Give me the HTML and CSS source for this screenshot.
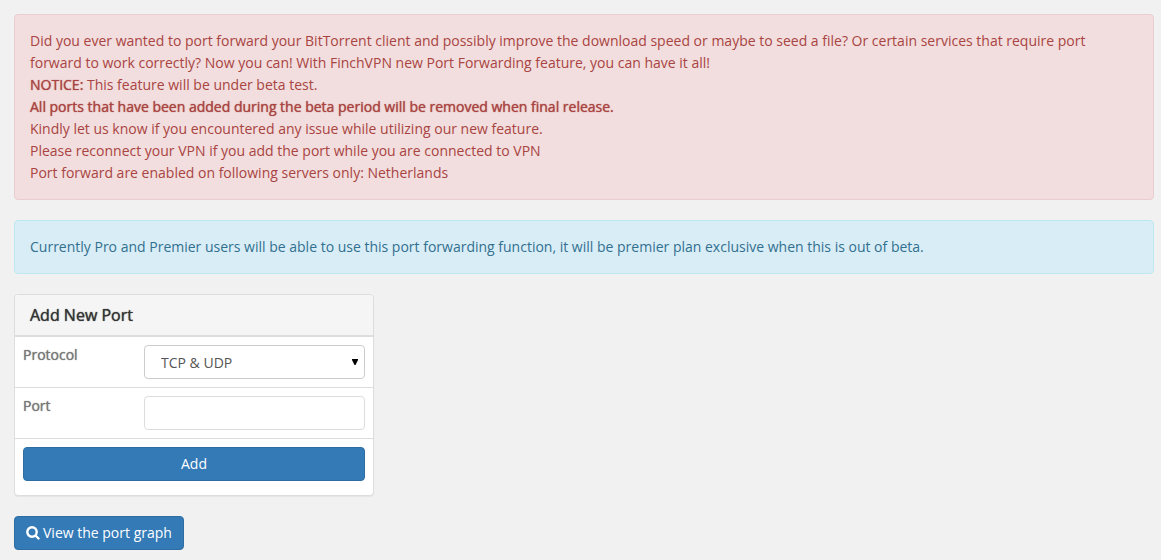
FILE: index.html
```html
<!DOCTYPE html>
<html lang="en">

<head>
    <meta charset="UTF-8">
    <meta name="viewport" content="width=device-width, initial-scale=1.0">
    <title>Port Forwarding</title>
    <link rel="stylesheet" href="styles.css">
</head>

<body>

    <div class="alert alert-danger">
        Did you ever wanted to port forward your BitTorrent client and possibly improve the download speed or maybe to seed a file? Or certain services that require port forward to work correctly? Now you can! With FinchVPN new Port Forwarding feature, you can have it all!<br>
        <b>NOTICE:</b> This feature will be under beta test.<br>
        <b>All ports that have been added during the beta period will be removed when final release.</b><br>
        Kindly let us know if you encountered any issue while utilizing our new feature.<br>
        Please reconnect your VPN if you add the port while you are connected to VPN<br>
        Port forward are enabled on following servers only: Netherlands
    </div>

    <div class="alert alert-info">
        Currently Pro and Premier users will be able to use this port forwarding function, it will be premier plan exclusive when this is out of beta.
    </div>

    <form class="panel">
        <h3 class="panel-heading">Add New Port</h3>
        <div class="form-row">
            <label for="protocol">Protocol</label>
            <div class="select-wrap">
                <select id="protocol" class="form-control">
                    <option>TCP &amp; UDP</option>
                    <option>TCP</option>
                    <option>UDP</option>
                </select>
                <svg class="arrow" width="6" height="6" viewBox="0 0 6 6"><path d="M0 0h6v1L3.5 6h-1L0 1z"/></svg>
            </div>
        </div>
        <div class="form-row">
            <label for="port">Port</label>
            <input type="text" id="port" class="form-control">
        </div>
        <div class="form-row form-submit">
            <button type="button" class="btn">Add</button>
        </div>
    </form>

    <a href="#" class="btn">
        <svg class="icon" width="14" height="14" viewBox="0 0 14 14"><circle cx="6" cy="6" r="4.7"/><path d="M9.5 9.5L12.5 12.5"/></svg>
        <span>View the port graph</span>
    </a>

</body>

</html>
```
FILE: styles.css
```css
* {
    box-sizing: border-box;
}

body {
    margin: 14px 7px 10px 14px;
    background-color: #f1f1f1;
    color: #676a6c;
    font-family: "Open Sans", "Liberation Sans", sans-serif;
    font-size: 14px;
    line-height: 22px;
}

.alert {
    padding: 15px;
    margin-bottom: 20px;
    border: 1px solid;
    border-radius: 4px;
}

.alert-danger {
    color: #a94442;
    background-color: #f2dede;
    border-color: #ebccd1;
}

.alert-info {
    color: #31708f;
    background-color: #d9edf7;
    border-color: #bce8f1;
}

/* only the regular weight is used, thickened a little */
b,
label,
.panel-heading {
    font-weight: 400;
    text-shadow: 0 0 1px currentColor;
}

.panel {
    max-width: 360px;
    margin-bottom: 20px;
    padding-bottom: 6px;
    background-color: #fff;
    border: 1px solid #ddd;
    border-radius: 4px;
    box-shadow: 0 1px 1px rgba(0, 0, 0, 0.05);
}

.panel-heading {
    margin: 0;
    padding: 9px 15px;
    font-size: 16px;
    color: #333;
    background-color: #f5f5f5;
    border-bottom: 1px solid #ddd;
    border-radius: 3px 3px 0 0;
}

.form-row {
    display: grid;
    grid-template-columns: 121px 1fr;
    align-items: start;
    padding: 8px;
    border-top: 1px solid #ddd;
}

.form-submit {
    grid-template-columns: 1fr;
}

label {
    line-height: 20px;
    color: #777;
}

.form-control {
    display: block;
    width: 100%;
    height: 34px;
    padding: 7px 16px 5px;
    font: inherit;
    line-height: 20px;
    color: #555;
    background-color: #fff;
    border: 1px solid #ddd;
    border-radius: 4px;
}

select.form-control {
    appearance: none;
    border-color: #ccc;
}

.select-wrap {
    position: relative;
}

.arrow {
    position: absolute;
    top: 14px;
    right: 7px;
    pointer-events: none;
}

.btn {
    display: inline-flex;
    align-items: center;
    justify-content: center;
    gap: 3px;
    height: 34px;
    padding: 0 11px;
    font: inherit;
    color: #fff;
    text-decoration: none;
    background-color: #337ab7;
    border: 1px solid #2e6da4;
    border-radius: 4px;
    cursor: pointer;
}

.btn:hover {
    background-color: #286090;
}

.icon {
    fill: none;
    stroke: #fff;
    stroke-width: 2.4;
    stroke-linecap: round;
}
```
